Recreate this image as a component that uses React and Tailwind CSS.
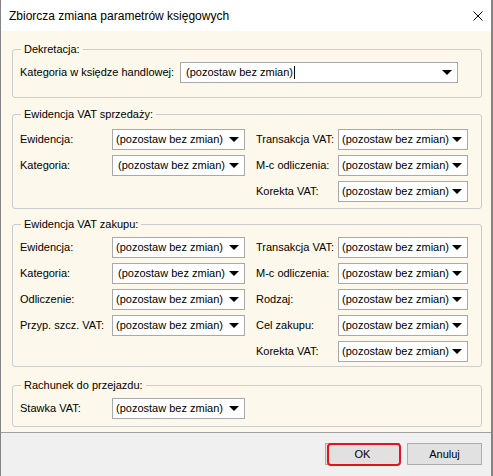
import clsx from 'clsx';

const FONT = "font-['Liberation_Sans',Arial,sans-serif]";

const Arrow = () => (
  <svg width="10" height="5" viewBox="0 0 10 5" className="shrink-0">
    <path d="M0 0h10L5 5z" fill="#000" />
  </svg>
);

function Combo({ className, indent = 'pl-[3px]', cursor = false }) {
  return (
    <div
      className={clsx(
        'flex h-[21px] items-center border border-[#a9a9a9] bg-white pr-[5px]',
        className
      )}
    >
      <span className={clsx('flex flex-1 items-center whitespace-nowrap', indent)}>
        (pozostaw bez zmian)
        {cursor && <span className="ml-px inline-block h-[13px] w-px bg-black" />}
      </span>
      <Arrow />
    </div>
  );
}

function Group({ title, className, children }) {
  return (
    <fieldset className={clsx('rounded-[3px] border border-[#cccccc] px-[7px]', className)}>
      <legend className="ml-px px-[3px] leading-[14px]">{title}</legend>
      {children}
    </fieldset>
  );
}

// wiersze: [lewa etykieta, prawa etykieta]
function VatRows({ rows }) {
  return (
    <div className="grid grid-cols-[92px_133px_11px_82px_130px] gap-y-[5px]">
      {rows.map(([left, right], i) => (
        <div key={i} className="contents">
          {left ? (
            <>
              <div className="flex items-center">{left}</div>
              <Combo indent={left === 'Kategoria:' ? 'pl-[5px]' : 'pl-[3px]'} />
            </>
          ) : (
            <>
              <div />
              <div />
            </>
          )}
          <div />
          <div className="flex items-center">{right}</div>
          <Combo />
        </div>
      ))}
    </div>
  );
}

export default function App() {
  return (
    <div
      className={clsx(
        'flex h-[476px] w-[493px] flex-col border-l border-r-2 border-[#858585] text-[11px] text-black',
        FONT
      )}
    >
      {/* Pasek tytułu */}
      <div className="flex h-[31px] shrink-0 items-center justify-between bg-white pl-[8px] pr-[8px]">
        <span className="text-[12px]">Zbiorcza zmiana parametrów księgowych</span>
        <svg width="10" height="10" viewBox="0 0 10 10">
          <path d="M0.5 0.5L9.5 9.5M9.5 0.5L0.5 9.5" stroke="#000" strokeWidth="1" />
        </svg>
      </div>

      {/* Treść */}
      <div className="flex flex-col border-b border-[#a0a0a0] bg-[#fdf8ec] pl-[11px] pr-[9px] pb-[5px]">
        <Group title="Dekretacja:" className="mt-[11px] pt-[6px] pb-[14px]">
          <div className="flex items-center">
            <div className="w-[160px]">Kategoria w księdze handlowej:</div>
            <Combo className="w-[278px]" indent="pl-[5px]" cursor />
          </div>
        </Group>

        <Group title="Ewidencja VAT sprzedaży:" className="mt-[9px] pt-[8px] pb-[6px]">
          <VatRows
            rows={[
              ['Ewidencja:', 'Transakcja VAT:'],
              ['Kategoria:', 'M-c odliczenia:'],
              [null, 'Korekta VAT:'],
            ]}
          />
        </Group>

        <Group title="Ewidencja VAT zakupu:" className="mt-[8px] pt-[6px] pb-[4px]">
          <VatRows
            rows={[
              ['Ewidencja:', 'Transakcja VAT:'],
              ['Kategoria:', 'M-c odliczenia:'],
              ['Odliczenie:', 'Rodzaj:'],
              ['Przyp. szcz. VAT:', 'Cel zakupu:'],
              [null, 'Korekta VAT:'],
            ]}
          />
        </Group>

        <Group title="Rachunek do przejazdu:" className="mt-[11px] pt-[6px] pb-[7px]">
          <div className="flex items-center">
            <div className="w-[92px]">Stawka VAT:</div>
            <Combo className="w-[133px]" />
          </div>
        </Group>
      </div>

      {/* Przyciski */}
      <div className="flex flex-1 items-start justify-end gap-[7px] bg-[#f0f0f0] pt-[10px] pr-[9px]">
        <button className="relative h-[22px] w-[75px] border border-[#adadad] bg-[#e1e1e1]">
          OK
          <span className="absolute -top-px -bottom-[2px] left-px -right-[2px] rounded-[4px] border-2 border-[#e0161c]" />
        </button>
        <button className="h-[22px] w-[75px] border border-[#adadad] bg-[#e1e1e1]">Anuluj</button>
      </div>
    </div>
  );
}
